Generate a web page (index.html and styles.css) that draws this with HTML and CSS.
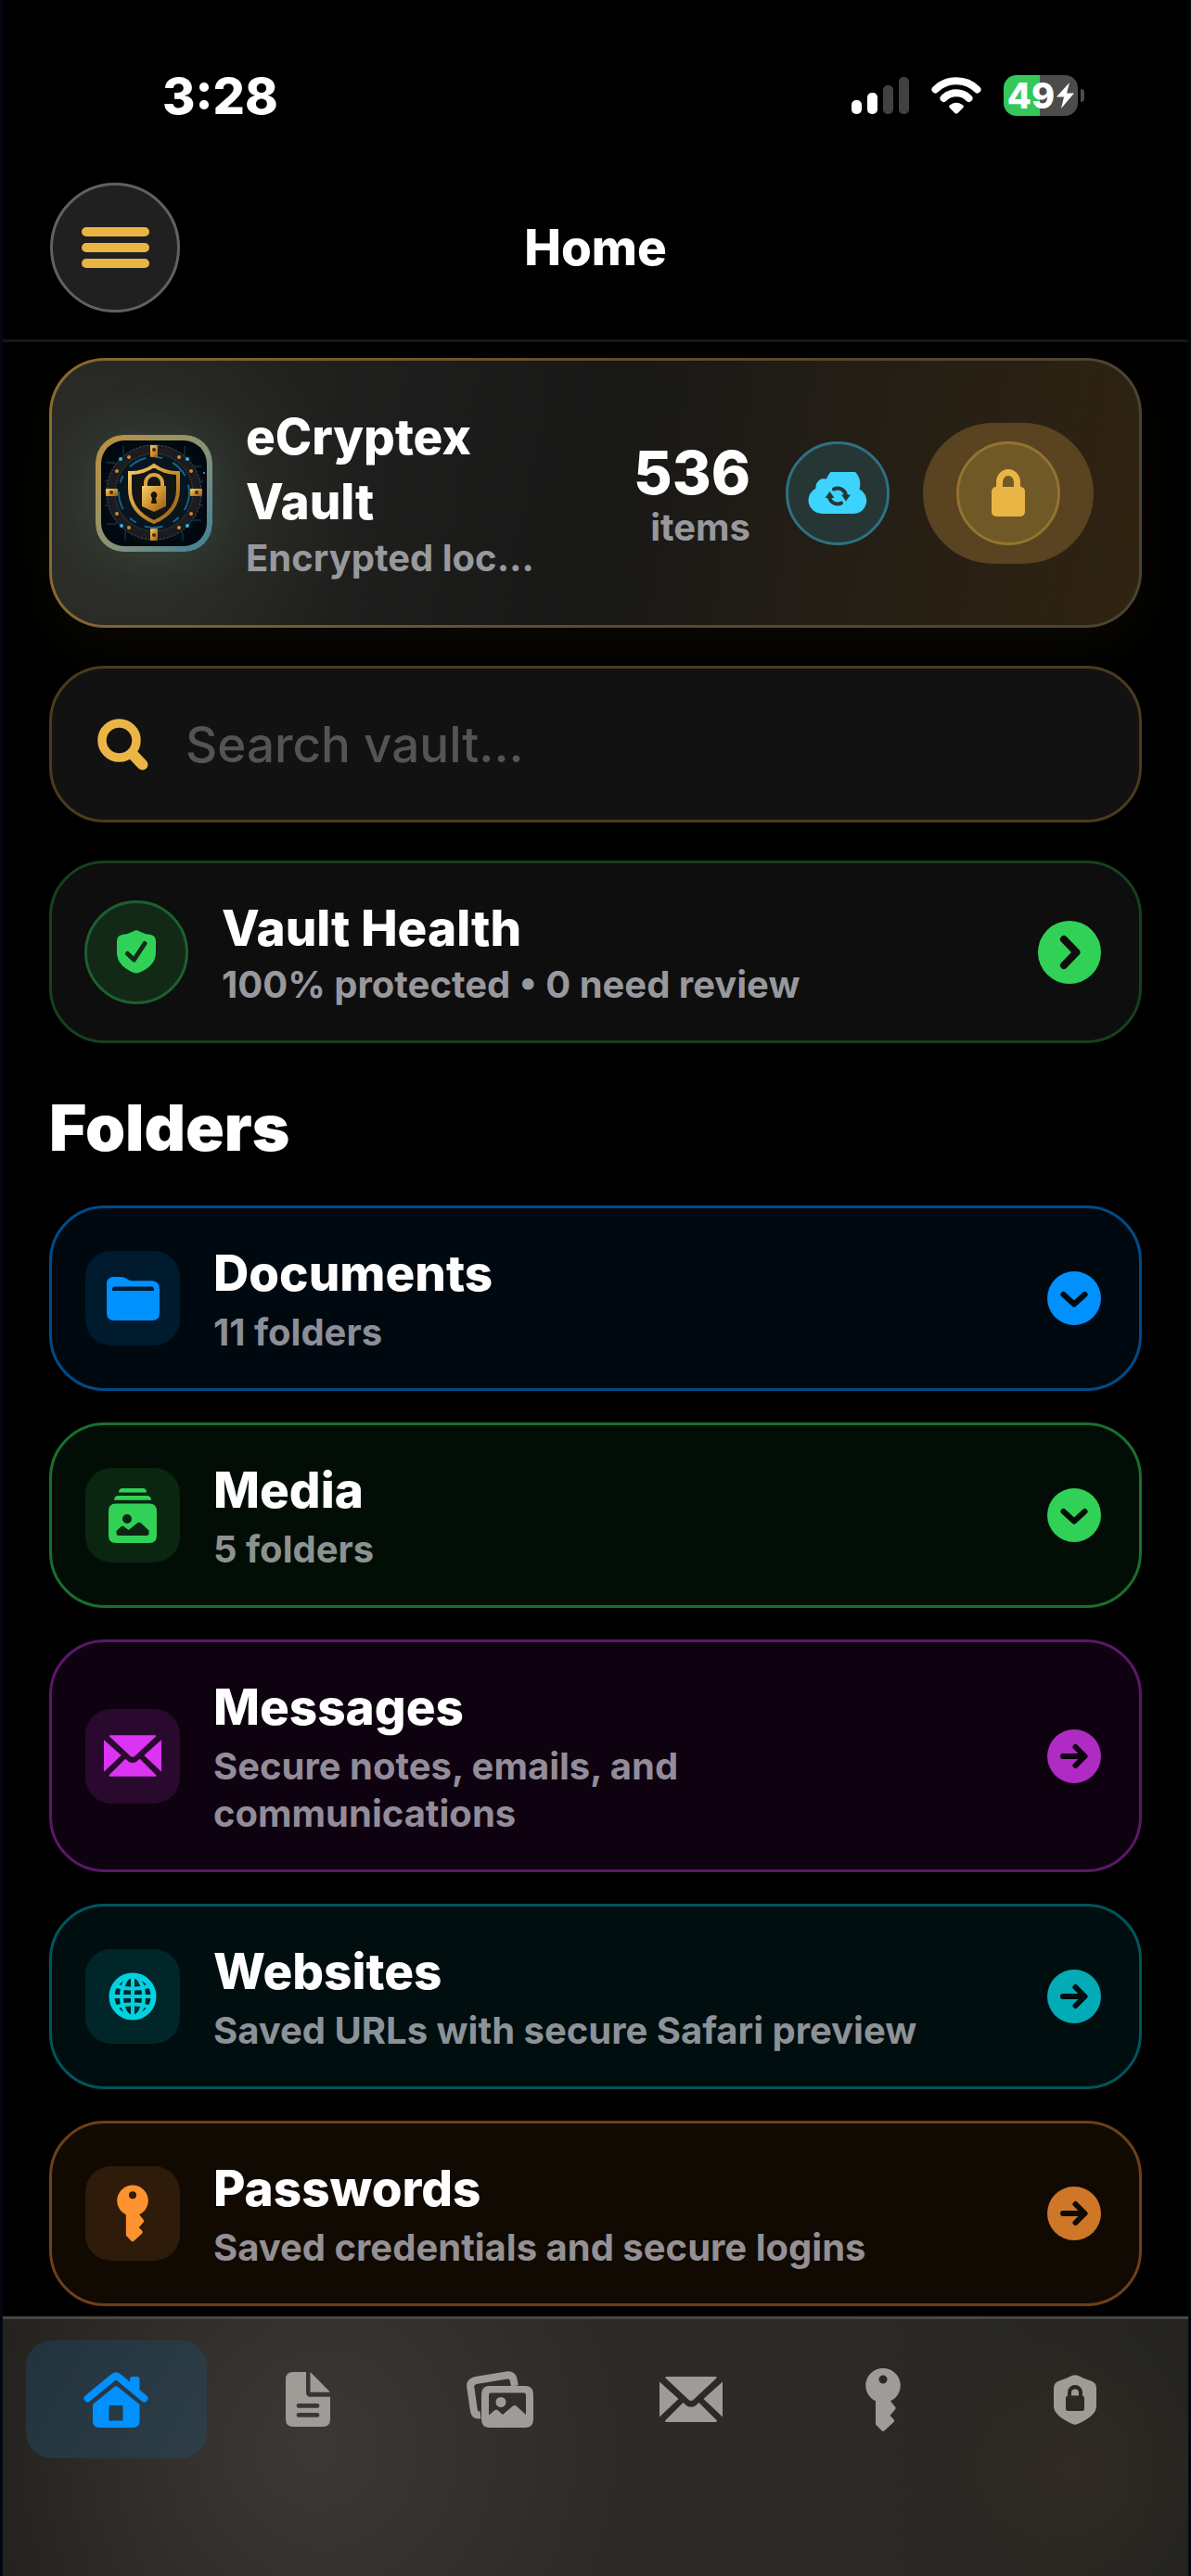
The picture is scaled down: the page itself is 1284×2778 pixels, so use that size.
FILE: index.html
```html
<!DOCTYPE html>
<html lang="en">
<head>
<meta charset="utf-8">
<meta name="viewport" content="width=device-width, initial-scale=1">
<title>Home</title>
<link rel="stylesheet" href="styles.css">
</head>
<body>
<svg class="symbols" aria-hidden="true">
  <defs>
    <symbol id="mail" viewBox="0 0 68 49">
      <path d="M8 0H60Q63 0 61 2L37 24.500Q34 27.500 31 24.500L7 2Q5 0 8 0Z"/>
      <path d="M0 5.500L20.500 24L0 43.500ZM68 5.500L47.500 24L68 43.500Z"/>
      <path d="M6.500 47L25.500 28L29 31.200Q34 34.500 39 31.200L42.500 28L61.500 47Q63 49 60 49H8Q5 49 6.500 47Z"/>
    </symbol>
    <symbol id="key" viewBox="0 0 38 68">
      <path fill-rule="evenodd" d="M19 0A18.500 18.500 0 0 1 27 35.300L32 41.500Q33 43 32 44.500L26.500 51L30.500 55Q31.500 56.500 30.500 58L20.500 67.300Q19 68.500 17.500 67.300L11 60.500V35.300A18.500 18.500 0 0 1 19 0ZM19 7.500A4.500 4.500 0 1 0 19 16.500A4.500 4.500 0 1 0 19 7.500Z"/>
    </symbol>
    <symbol id="chevron-down" viewBox="0 0 58 58">
      <circle cx="29" cy="29" r="29"/>
      <path class="cut" d="M17.500 25L29 35.500L40.500 25"/>
    </symbol>
    <symbol id="arrow-right" viewBox="0 0 58 58">
      <circle cx="29" cy="29" r="29"/>
      <path class="cut" d="M17 29H39M30.500 19L40.500 29L30.500 39"/>
    </symbol>
  </defs>
</svg>

<div class="status">
  <time class="status-time">3:28</time>
  <div class="status-icons">
    <svg width="62" height="40" viewBox="0 0 62 40" aria-label="Signal">
      <g fill="#fff"><rect y="25" width="11" height="15" rx="5"/><rect x="17" y="17" width="11" height="23" rx="5"/></g>
      <g fill="#414141"><rect x="34" y="9" width="11" height="31" rx="5"/><rect x="51" width="11" height="40" rx="5"/></g>
    </svg>
    <svg width="54" height="40" viewBox="0 0 54 40" aria-label="Wi-Fi">
      <path fill="none" stroke="#fff" stroke-width="8" stroke-linecap="round" d="M4.500 13.500A32 32 0 0 1 49.500 13.500M13.500 23A19 19 0 0 1 40.500 23"/>
      <path fill="#fff" d="M25.500 39L20 33.500Q18 31.500 20.500 30Q27 25.500 33.500 30Q36 31.500 34 33.500L28.500 39Q27 40.500 25.500 39Z"/>
    </svg>
    <div class="battery">
      <div class="battery-body"><span>49</span><svg width="19" height="28" viewBox="0 0 19 28" fill="#fff" aria-hidden="true"><path d="M14 0L0 15.500H8L5 28L19 11.500H11Z"/></svg></div>
      <div class="battery-tip"></div>
    </div>
  </div>
</div>

<header class="topbar">
  <button class="menu" aria-label="Menu"><span></span><span></span><span></span></button>
  <h1>Home</h1>
</header>

<main class="content">
  <section class="card vault">
    <svg class="app-icon" width="126" height="126" viewBox="0 0 126 126" role="img" aria-label="eCryptex">
      <defs>
        <linearGradient id="rim" x1="0" y1="0" x2="1" y2="1"><stop stop-color="#bf9135"/><stop offset=".55" stop-color="#86927a"/><stop offset="1" stop-color="#3a7f99"/></linearGradient>
        <linearGradient id="gold" x1="0" y1="0" x2="1" y2="1"><stop stop-color="#f6cd6b"/><stop offset=".5" stop-color="#cf9330"/><stop offset="1" stop-color="#8f5a12"/></linearGradient>
        <radialGradient id="night"><stop stop-color="#14181c"/><stop offset=".75" stop-color="#06141d"/><stop offset="1" stop-color="#02080f"/></radialGradient>
      </defs>
      <rect width="126" height="126" rx="30" fill="url(#rim)"/>
      <rect x="6" y="6" width="114" height="114" rx="25" fill="url(#night)"/>
      <g fill="none" stroke="#0d4a66" stroke-width="1"><path d="M12 30h8l8 8M30 12v8l6 6M96 12v10l-6 6M114 34h-8l-6 6M12 96h10l6-6M32 114v-8l6-8M114 92h-10l-6-4M94 114v-8l-6-8M10 50h6M10 76h6M110 50h6M110 76h6"/></g>
      <circle cx="63" cy="62" r="46" fill="none" stroke="#1b1c20" stroke-width="11"/>
      <circle cx="63" cy="62" r="51" fill="none" stroke="#4d5156" stroke-width="1" stroke-dasharray="2 2"/>
      <circle cx="63" cy="62" r="42" fill="none" stroke="#565b60" stroke-width="1" stroke-dasharray="1 2"/>
      <circle cx="63" cy="62" r="38" fill="none" stroke="#146489" stroke-width="2" stroke-dasharray="20 10 8 12"/>
      <g fill="#2bb6ea"><circle cx="27" cy="26" r="2"/><circle cx="99" cy="26" r="2"/><circle cx="28" cy="98" r="2"/><circle cx="99" cy="98" r="2"/><circle cx="117" cy="41" r="1"/></g>
      <g fill="#c98d35"><circle cx="36" cy="24" r="2"/><circle cx="90" cy="24" r="2"/><circle cx="23" cy="39" r="2"/><circle cx="103" cy="39" r="2"/><circle cx="23" cy="85" r="2"/><circle cx="103" cy="85" r="2"/><circle cx="36" cy="100" r="2"/><circle cx="90" cy="100" r="2"/></g>
      <g fill="url(#gold)"><rect x="59" y="11" width="8" height="13" rx="1"/><rect x="59" y="101" width="8" height="13" rx="1"/><rect x="11" y="58" width="13" height="8" rx="1"/><rect x="102" y="58" width="13" height="8" rx="1"/></g>
      <g fill="#4a2d08"><circle cx="63" cy="16" r="2"/><circle cx="63" cy="108" r="2"/><circle cx="17" cy="62" r="2"/><circle cx="109" cy="62" r="2"/></g>
      <path d="M63 33Q74 41 89 41V58Q89 83 63 94Q37 83 37 58V41Q52 41 63 33Z" fill="#121417" stroke="url(#gold)" stroke-width="4"/>
      <path d="M54 57V52A9 9 0 0 1 72 52V57" fill="none" stroke="#d9a243" stroke-width="4"/>
      <path d="M50 55H76V77L63 83L50 77Z" fill="url(#gold)"/>
      <path d="M63 61A4 4 0 0 1 65 68L66 74H60L61 68A4 4 0 0 1 63 61Z" fill="#1a1206"/>
    </svg>
    <div class="card-text">
      <h2>eCryptex Vault</h2>
      <p class="sub">Encrypted&nbsp;loc…</p>
    </div>
    <div class="count"><strong>536</strong><span class="sub">items</span></div>
    <button class="round sync" aria-label="Sync">
      <svg width="64" height="45" viewBox="0 0 64 45" fill="#3cd3ff">
        <path d="M15 45A14.500 14.500 0 0 1 8.600 17.500A9 9 0 0 1 20 7.500A18.500 18.500 0 0 1 55.500 18.500A14 14 0 0 1 50 45Z"/>
        <g fill="none" stroke="#263634" stroke-width="4" stroke-linecap="round"><path d="M28 18.500A9 9 0 0 1 41 25M36 33.500A9 9 0 0 1 23 27"/></g>
        <path fill="#263634" d="M36 24.500H46L41 31.500ZM18.500 28H28.500L23.500 21Z"/>
      </svg>
    </button>
    <button class="lock" aria-label="Lock vault">
      <span class="round">
        <svg width="36" height="51" viewBox="0 0 36 51"><rect y="19" width="36" height="32" rx="5" fill="#ebb546"/><path d="M8.500 22V14A9.500 10.500 0 0 1 27.500 14V22" fill="none" stroke="#ebb546" stroke-width="7"/></svg>
      </span>
    </button>
  </section>

  <label class="card search">
    <svg width="55" height="56" viewBox="0 0 55 56" fill="none" stroke="#ebb546" stroke-linecap="round" aria-hidden="true"><circle cx="23.500" cy="23.500" r="18.500" stroke-width="9.500"/><path d="M40 40.500L48.500 49.500" stroke-width="12"/></svg>
    <input type="search" placeholder="Search vault..." aria-label="Search vault">
  </label>

  <a class="card health" href="#health">
    <span class="round">
      <svg width="42" height="47" viewBox="0 0 42 47"><path fill="#31d158" d="M18 1.200Q21 -.5 24 1.200Q29 4 36 5Q42 6 42 12V24Q42 38 25 45.500Q21 47.500 17 45.500Q0 38 0 24V12Q0 6 6 5Q13 4 18 1.200Z"/><path fill="none" stroke="#132918" stroke-width="5" stroke-linecap="round" stroke-linejoin="round" d="M11.500 25.500L18.500 32L30 14.500"/></svg>
    </span>
    <span class="card-text"><span class="title">Vault Health</span><span class="sub">100% protected • 0 need review</span></span>
    <svg width="68" height="68" viewBox="0 0 68 68" aria-hidden="true"><circle cx="34" cy="34" r="34" fill="#31d158"/><path fill="none" stroke="#0e0e0e" stroke-width="8" stroke-linecap="round" stroke-linejoin="round" d="M28 20L41.500 34L28 48"/></svg>
  </a>

  <section class="folders">
    <h2 class="heading">Folders</h2>
    <a class="card folder documents" href="#documents">
      <span class="tile"><svg width="57" height="47" viewBox="0 0 57 47"><path fill-rule="evenodd" d="M8 0H15Q19 0 22 2.300Q24 4.200 28 4.200H48Q57 4.200 57 13V39Q57 47 49 47H8Q0 47 0 39V8Q0 0 8 0ZM9 10.500Q6 10.500 6 13.500V15H51V13.500Q51 10.500 48 10.500Z"/></svg></span>
      <span class="card-text"><span class="title">Documents</span><span class="sub">11 folders</span></span>
      <svg class="go" width="58" height="58"><use href="#chevron-down"/></svg>
    </a>
    <a class="card folder media" href="#media">
      <span class="tile"><svg width="52" height="59" viewBox="0 0 52 59"><path d="M15 0H37Q41 0 41 4.500H11Q11 0 15 0ZM11 8H41Q46 8 46 12.700H6Q6 8 11 8Z"/><path fill-rule="evenodd" d="M8 16.500H44Q52 16.500 52 24.500V51Q52 59 44 59H8Q0 59 0 51V24.500Q0 16.500 8 16.500ZM20 28A5 5 0 1 0 20 38A5 5 0 1 0 20 28ZM11.500 51H41Q43.500 51 43.500 48.500V45.500L35 37.500Q33 36 31 37.500L21.500 45L17 41.500Q15 40 13 41.800L8.500 46V48.500Q8.500 51 11.500 51Z"/></svg></span>
      <span class="card-text"><span class="title">Media</span><span class="sub">5 folders</span></span>
      <svg class="go" width="58" height="58"><use href="#chevron-down"/></svg>
    </a>
    <a class="card folder messages" href="#messages">
      <span class="tile"><svg width="62" height="45"><use href="#mail"/></svg></span>
      <span class="card-text"><span class="title">Messages</span><span class="sub">Secure notes, emails, and communications</span></span>
      <svg class="go" width="58" height="58"><use href="#arrow-right"/></svg>
    </a>
    <a class="card folder websites" href="#websites">
      <span class="tile"><svg width="52" height="52" viewBox="0 0 52 52"><g fill="none" stroke="currentColor" stroke-width="4"><circle cx="26" cy="26" r="22.500" stroke-width="6"/><ellipse cx="26" cy="26" rx="12" ry="22"/><path d="M26 3V49M3 26H49M8 14.500Q26 21 44 14.500M8 37.500Q26 31 44 37.500"/></g></svg></span>
      <span class="card-text"><span class="title">Websites</span><span class="sub">Saved URLs with secure Safari preview</span></span>
      <svg class="go" width="58" height="58"><use href="#arrow-right"/></svg>
    </a>
    <a class="card folder passwords" href="#passwords">
      <span class="tile"><svg width="34" height="62"><use href="#key"/></svg></span>
      <span class="card-text"><span class="title">Passwords</span><span class="sub">Saved credentials and secure logins</span></span>
      <svg class="go" width="58" height="58"><use href="#arrow-right"/></svg>
    </a>
  </section>
</main>

<nav class="tabs" aria-label="Sections">
  <a class="tab active" href="#home" aria-label="Home"><svg width="70" height="60" viewBox="0 0 70 60"><path d="M50 16V8Q50 5 53 5H57.500Q60.500 5 60.500 8V24Z"/><path d="M4.500 28.500L32 5.800Q35 3 38 5.800L65.500 28.500" fill="none" stroke="currentColor" stroke-width="8" stroke-linecap="round"/><path fill-rule="evenodd" d="M32.500 16.500Q35 14 37.500 16.500L60.500 35V53Q60.500 60 53.500 60H17Q10 60 10 53V35ZM29 36Q27.500 36 27.500 37.500V52.500H42.500V37.500Q42.500 36 41 36Z"/></svg></a>
  <a class="tab" href="#files" aria-label="Documents"><svg width="48" height="59" viewBox="0 0 48 59"><path d="M26.500 0L48 21.700H26.500Z"/><path fill-rule="evenodd" d="M8 0H22V22Q22 26.700 26.500 26.700H48V51Q48 59 40 59H8Q0 59 0 51V8Q0 0 8 0ZM14 34A2.400 2.400 0 0 0 14 38.800H34A2.400 2.400 0 0 0 34 34ZM14 44A2.400 2.400 0 0 0 14 48.800H34A2.400 2.400 0 0 0 34 44Z"/></svg></a>
  <a class="tab" href="#photos" aria-label="Photos"><svg width="72" height="61" viewBox="0 0 72 61"><path d="M52 16L50.500 9Q49 3.500 43.500 4.500L10 10Q3.500 11.500 4.200 17L8 43Q9 48 15 47.500" fill="none" stroke="currentColor" stroke-width="8"/><path fill-rule="evenodd" d="M25 16H63Q72 16 72 25V52Q72 61 63 61H25Q16 61 16 52V25Q16 16 25 16ZM26.500 23.500Q24 23.500 24 26V47.500L30 42.500Q32 41 34 42.500L39 47L49.500 38Q52 36 54 38L64 47V26Q64 23.500 61.500 23.500ZM37 28A5.500 5.500 0 1 1 37 39A5.500 5.500 0 1 1 37 28Z"/></svg></a>
  <a class="tab" href="#mail-tab" aria-label="Messages"><svg width="68" height="49"><use href="#mail"/></svg></a>
  <a class="tab" href="#keys" aria-label="Passwords"><svg width="38" height="68"><use href="#key"/></svg></a>
  <a class="tab" href="#security" aria-label="Security"><svg width="46" height="54" viewBox="0 0 46 54"><path fill-rule="evenodd" d="M20 .8Q23 -.5 26 .8Q32 4 40 6.500Q46 8.500 46 14V34Q46 44 26 53Q23 54.500 20 53Q0 44 0 34V14Q0 8.500 6 6.500Q14 4 20 .8ZM15 22.500Q13 23 13 25V36.500Q13 39 15.500 39H30.500Q33 39 33 36.500V25Q33 23 31 22.500V19A8 8 0 0 0 15 19ZM19 22.500V19.500A4 4 0 0 1 27 19.500V22.500Z"/></svg></a>
</nav>
</body>
</html>
```
FILE: styles.css
```css
* { box-sizing: border-box; }

body {
  margin: 0;
  min-height: 100vh;
  display: flex;
  flex-direction: column;
  background: #000;
  border: solid #03070f;
  border-width: 0 3px;
  color: #fff;
  font-family: Inter, "Liberation Sans", sans-serif;
  font-size: 53px;
}

h1, h2, p { margin: 0; font-size: inherit; }
a { color: inherit; text-decoration: none; }
button { border: 0; padding: 0; background: none; color: inherit; font: inherit; }
svg { display: block; flex: none; }
svg:not([fill]) { fill: currentColor; }
.symbols { position: absolute; width: 0; height: 0; }

/* status bar */
.status {
  display: flex;
  align-items: center;
  justify-content: space-between;
  padding: 78px 112px 0 172px;
  height: 128px;
}
.status-time { font-size: 54px; font-weight: 800; }
.status-icons { display: flex; align-items: center; gap: 24px; }
.battery { display: flex; align-items: center; gap: 3px; }
.battery-body {
  width: 80px;
  height: 44px;
  border-radius: 14px;
  display: flex;
  align-items: center;
  justify-content: center;
  gap: 2px;
  background: linear-gradient(90deg, #35c759 49%, #4c4c4c 49%);
  font-size: 38px;
  font-weight: 800;
}
.battery-tip { width: 4px; height: 14px; border-radius: 0 7px 7px 0; background: #4c4c4c; }

/* title bar */
.topbar {
  display: grid;
  grid-template-columns: 1fr auto 1fr;
  align-items: center;
  padding: 69px 51px 29px;
  border-bottom: 3px solid #161616;
}
.topbar h1 { font-weight: 800; }
.menu {
  width: 140px;
  height: 140px;
  border: 3px solid #616161;
  border-radius: 50%;
  background: #202020;
  display: flex;
  flex-direction: column;
  align-items: center;
  justify-content: center;
  gap: 7px;
}
.menu span { width: 73px; height: 10px; border-radius: 5px; background: #ebb546; }

/* cards */
.content {
  flex: 1;
  display: flex;
  flex-direction: column;
  gap: 41px;
  padding: 17px 50px 11px;
}
.card {
  display: flex;
  align-items: center;
  border: 3px solid;
  border-radius: 60px;
}
.card-text { flex: 1; min-width: 0; display: flex; flex-direction: column; }
.title, .card-text h2 { font-weight: 800; line-height: 70px; }
.sub { color: #98989d; font-size: 40px; font-weight: 700; line-height: 51px; }
.round {
  width: 112px;
  height: 112px;
  flex: none;
  border: 3px solid;
  border-radius: 50%;
  display: flex;
  align-items: center;
  justify-content: center;
}

.vault {
  padding: 47px 49px 47px 47px;
  border-color: transparent;
  background:
    radial-gradient(circle at 112px 170px, #3e443480, #3e443400 220px) padding-box,
    linear-gradient(100deg, #272725, #181817 50%, #241e15 72%, #302311) padding-box,
    linear-gradient(100deg, #8a6b2e, #5f4c27 50%, #4a4233) border-box;
  box-shadow: 0 24px 60px #ebb5460c;
}
.app-icon { border-radius: 30px; box-shadow: 0 0 60px #62a0a82e; }
.vault .card-text { margin-left: 36px; }
.count { display: flex; flex-direction: column; align-items: flex-end; padding-top: 8px; margin: 0 38px 0 100px; }
.count strong { font-size: 64px; font-weight: 800; line-height: 66px; }
.sync { border-color: #2d7182; background: #263634; margin-right: 36px; }
.lock {
  width: 184px;
  height: 152px;
  border-radius: 76px;
  background: #594320;
  display: flex;
  align-items: center;
  justify-content: center;
}
.lock .round { border-color: #94732f; background: #715827; }

.search { gap: 40px; padding: 0 49px; height: 169px; border-color: #4c3b1c; background: #121212; }
.search input {
  flex: 1;
  min-width: 0;
  border: 0;
  padding: 0;
  outline: 0;
  background: none;
  color: #fff;
  font: inherit;
  font-weight: 500;
}
.search input::placeholder { color: #545456; opacity: 1; }

.health { gap: 36px; padding: 35px 41px 35px 35px; border-color: #16401f; background: #0e0e0e; }
.health .round { border-color: #1d6030; background: #132918; }

/* folders */
.folders { display: flex; flex-direction: column; gap: 34px; }
.heading { font-size: 69px; font-weight: 900; line-height: 100px; }
.folder { padding: 35px 41px 35px 36px; border-color: var(--line); background: var(--fill); }
.folder .card-text { gap: 3px; margin: 0 80px 0 36px; }
.tile {
  width: 102px;
  height: 102px;
  flex: none;
  border-radius: 28px;
  display: flex;
  align-items: center;
  justify-content: center;
  background: var(--tile);
  color: var(--icon);
}
.go { color: var(--go, var(--icon)); }
.cut { fill: none; stroke: var(--fill); stroke-width: 6px; stroke-linecap: round; stroke-linejoin: round; }
.documents { --line: #004b87; --fill: #000910; --tile: #001a2e; --icon: #0091ff; }
.media { --line: #1a6f2f; --fill: #020e05; --tile: #0a2611; --icon: #31d158; }
.messages { --line: #5c1768; --fill: #0f0210; --tile: #290a2e; --icon: #db34f2; --go: #b02ac4; }
.websites { --line: #00555b; --fill: #000e0f; --tile: #00262a; --icon: #00d2e0; --go: #03abb7; }
.passwords { --line: #6f3f18; --fill: #110a03; --tile: #2f1b0a; --icon: #ff9230; --go: #cf7728; }
.documents .sub { color: #8c8f99; }
.media .sub { color: #8d9291; }
.messages .sub { color: #938c99; }
.websites .sub { color: #8c9298; }
.passwords .sub { color: #949093; }

/* tab bar */
.tabs {
  display: flex;
  gap: 12px;
  padding: 23px 25px 127px;
  border-top: 3px solid #484743;
  background:
    radial-gradient(circle at 335px 140px, #3b3835, #3b383500 340px),
    radial-gradient(circle at 1150px 160px, #302a23, #302a2300 160px),
    linear-gradient(90deg, #25231f, #2c2a26 30%, #2c2a26 70%, #252420);
}
.tab {
  flex: 1;
  height: 127px;
  border-radius: 28px;
  display: flex;
  align-items: center;
  justify-content: center;
  color: #9e9c97;
}
.tab.active { background: linear-gradient(120deg, #22333f, #2e3e48); color: #0091ff; }
```
